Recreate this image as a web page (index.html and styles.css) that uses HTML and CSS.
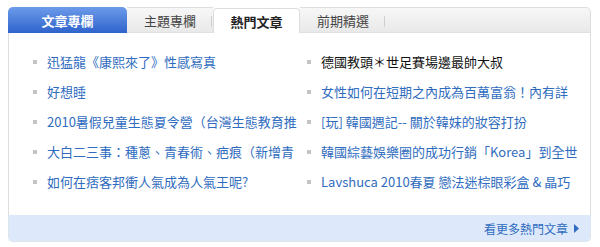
FILE: index.html
```html
<!DOCTYPE html>
<html lang="zh-Hant">
<head>
<meta charset="utf-8">
<link rel="stylesheet" href="styles.css">
</head>
<body>
<div class="box">
  <div class="tabs">
    <div class="tab tab-main">文章專欄</div>
    <div class="tab tab-plain tab-sep">主題專欄</div>
    <div class="tab tab-active">熱門文章</div>
    <div class="tab tab-plain tab-sep">前期精選</div>
    <div class="tab-fill"></div>
  </div>
  <div class="content">
    <ul class="list">
      <li><span class="txt">迅猛龍《康熙來了》性感寫真</span></li>
      <li><span class="txt dark">德國教頭＊世足賽場邊最帥大叔</span></li>
      <li><span class="txt">好想睡</span></li>
      <li><span class="txt">女性如何在短期之內成為百萬富翁！內有詳</span></li>
      <li><span class="txt">2010暑假兒童生態夏令營（台灣生態教育推</span></li>
      <li><span class="txt">[玩] 韓國週記-- 關於韓妹的妝容打扮</span></li>
      <li><span class="txt">大白二三事：種蔥、青春術、疤痕（新增青</span></li>
      <li><span class="txt">韓國綜藝娛樂圈的成功行銷「Korea」到全世</span></li>
      <li><span class="txt">如何在痞客邦衝人氣成為人氣王呢?</span></li>
      <li><span class="txt">Lavshuca 2010春夏 戀法迷棕眼彩盒 &amp; 晶巧</span></li>
    </ul>
  </div>
  <div class="footer">
    <span class="more">看更多熱門文章</span>
    <svg class="arrow" width="5" height="9" viewBox="0 0 5 9"><path d="M0 0 L5 4.5 L0 9 Z" fill="#2f6cc0"/></svg>
  </div>
</div>
</body>
</html>
```

FILE: styles.css
```css
html, body {
  margin: 0;
  padding: 0;
  background: #ffffff;
}
body {
  font-family: "Noto Sans CJK TC", "Noto Sans", sans-serif;
  font-size: 13px;
}
.box {
  margin: 7px 0 0 8px;
  width: 583px;
}
.tabs {
  display: flex;
  height: 26px;
  align-items: stretch;
}
.tab {
  display: flex;
  align-items: center;
  justify-content: center;
  font-size: 13px;
  position: relative;
}
.tab-main {
  width: 119px;
  color: #ffffff;
  font-weight: bold;
  background: linear-gradient(#6c9bea, #2f63cc);
  border-radius: 5px 5px 0 0;
}
.tab-plain {
  width: 86px;
  color: #444;
  background: linear-gradient(#f7f7f7, #e9e9e9);
  border-top: 1px solid #dedede;
  border-bottom: 1px solid #e0e0e0;
  box-sizing: border-box;
}
.tab-sep::after {
  content: "";
  position: absolute;
  right: 1px;
  top: 8px;
  width: 1px;
  height: 11px;
  background: #cfcfcf;
}
.tab-active {
  width: 87px;
  margin-top: 1px;
  background: #ffffff;
  color: #222;
  font-weight: bold;
  border: 1px solid #dddddd;
  border-bottom: none;
  border-radius: 4px 4px 0 0;
  box-sizing: border-box;
}
.tab-fill {
  flex: 1;
  background: linear-gradient(#f7f7f7, #e9e9e9);
  border-top: 1px solid #dedede;
  border-right: 1px solid #dddddd;
  border-bottom: 1px solid #e0e0e0;
  border-radius: 0 5px 0 0;
  box-sizing: border-box;
}
.content {
  border-left: 1px solid #dddddd;
  border-right: 1px solid #dddddd;
  height: 182px;
  box-sizing: border-box;
}
.list {
  list-style: none;
  margin: 0;
  padding: 14px 0 0 24px;
  display: grid;
  grid-template-columns: 274px 272px;
}
.list li {
  display: flex;
  align-items: center;
  height: 30px;
}
.list li::before {
  content: "";
  width: 4px;
  height: 4px;
  background: #c4c4c4;
  margin-right: 10px;
  flex: none;
}
.txt {
  display: block;
  width: 252px;
  white-space: nowrap;
  overflow: hidden;
  color: #2f6cc0;
  line-height: 30px;
}
.list li:nth-child(even) .txt {
  width: 258px;
}
.txt.dark {
  color: #111;
}
.footer {
  height: 27px;
  background: #dde9fb;
  border: 1px solid #dde4ee;
  border-top: none;
  border-radius: 0 0 5px 5px;
  box-sizing: border-box;
  display: flex;
  align-items: center;
  justify-content: flex-end;
  padding-right: 11px;
  gap: 6px;
}
.more {
  color: #2f6cc0;
  font-size: 12px;
}
.arrow {
  display: block;
}
```
